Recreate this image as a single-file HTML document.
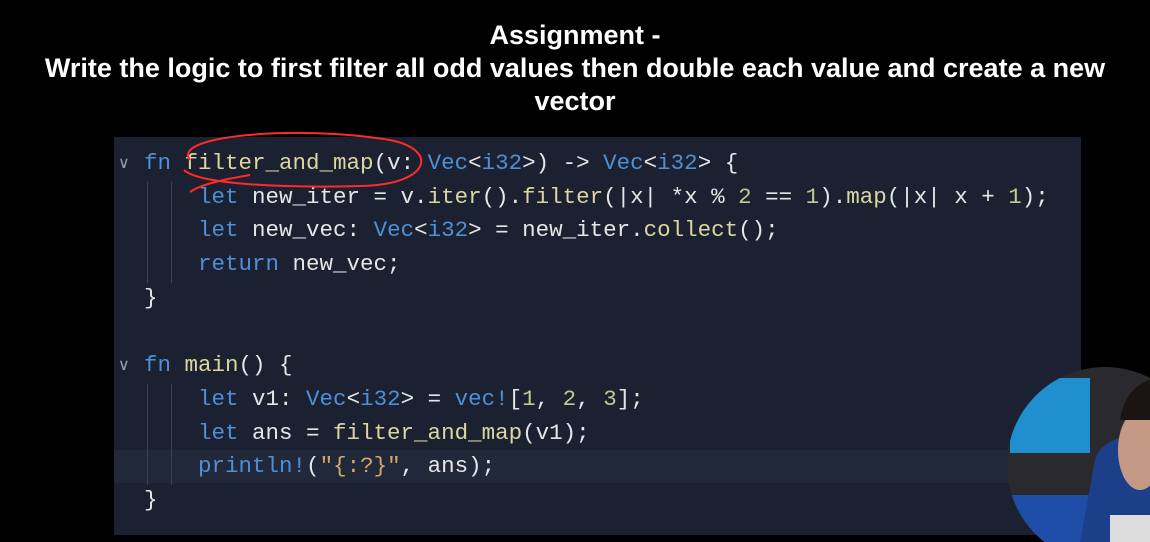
<!DOCTYPE html>
<html><head><meta charset="utf-8"><style>
body{margin:0;width:1150px;height:542px;background:#000;overflow:hidden;position:relative;font-family:"Liberation Sans",sans-serif}
.t{position:absolute;left:0;width:1150px;text-align:center;color:#fff;font-weight:bold;font-size:27px;line-height:33px;top:19px}
.ed{position:absolute;left:114px;top:137px;width:967px;height:398px;background:#1b2130}
.hl{position:absolute;left:114px;top:450px;width:967px;height:33px;background:#20283a}
.code{position:absolute;left:144px;top:147px;font-family:"Liberation Mono",monospace;font-size:22.5px;line-height:33.7px;color:#e6e6e6;white-space:pre}
.k{color:#4f8fd8}.f{color:#dcd7a0}.n{color:#b9cf93}.s{color:#d6a56a}
.g{position:absolute;width:1px;background:#3a4152}
.ch{position:absolute;left:118px;color:#9aa0ab;font-size:16px;font-family:"Liberation Sans",sans-serif}
</style></head><body>
<div class="t">Assignment -<br>Write the logic to first filter all odd values then double each value and create a new<br>vector</div>
<div class="ed"></div><div class="hl"></div>
<div class="g" style="left:147px;top:182px;height:101px"></div>
<div class="g" style="left:171px;top:182px;height:101px"></div>
<div class="g" style="left:147px;top:384px;height:101px"></div>
<div class="g" style="left:171px;top:384px;height:101px"></div>
<div class="ch" style="top:153px">&#8744;</div>
<div class="ch" style="top:355px">&#8744;</div>
<div class="code"><span class="k">fn</span> <span class="f">filter_and_map</span>(v: <span class="k">Vec</span>&lt;<span class="k">i32</span>&gt;) -&gt; <span class="k">Vec</span>&lt;<span class="k">i32</span>&gt; {
    <span class="k">let</span> new_iter = v.<span class="f">iter</span>().<span class="f">filter</span>(|x| *x % <span class="n">2</span> == <span class="n">1</span>).<span class="f">map</span>(|x| x + <span class="n">1</span>);
    <span class="k">let</span> new_vec: <span class="k">Vec</span>&lt;<span class="k">i32</span>&gt; = new_iter.<span class="f">collect</span>();
    <span class="k">return</span> new_vec;
}

<span class="k">fn</span> <span class="f">main</span>() {
    <span class="k">let</span> v1: <span class="k">Vec</span>&lt;<span class="k">i32</span>&gt; = <span class="k">vec!</span>[<span class="n">1</span>, <span class="n">2</span>, <span class="n">3</span>];
    <span class="k">let</span> ans = <span class="f">filter_and_map</span>(v1);
    <span class="k">println!</span>(<span class="s">"{:?}"</span>, ans);
}</div>
<svg style="position:absolute;left:0;top:0" width="1150" height="542">
<path d="M190 160 C170 135 300 125 390 140 C440 150 430 185 360 186 C290 188 200 185 184 170 M250 175 C220 180 200 185 190 192" fill="none" stroke="#ff2a2a" stroke-width="2"/>
<defs><clipPath id="c"><circle cx="1105" cy="465" r="98"/></clipPath></defs>
<g clip-path="url(#c)">
<rect x="1000" y="360" width="150" height="182" fill="#2a2a2e"/>
<rect x="1010" y="378" width="80" height="75" fill="#1f8fd0"/>
<rect x="1000" y="495" width="150" height="50" fill="#1e4ea8"/>
<path d="M1095 460 C1100 440 1130 430 1150 440 L1150 542 L1080 542 Z" fill="#1c3f8a"/>
<ellipse cx="1140" cy="450" rx="22" ry="40" fill="#c49a85"/>
<path d="M1120 420 C1125 385 1150 380 1150 380 L1150 420 Z" fill="#1a1512"/>
<rect x="1110" y="515" width="40" height="27" fill="#ddd"/>
</g>
</svg>
</body></html>
